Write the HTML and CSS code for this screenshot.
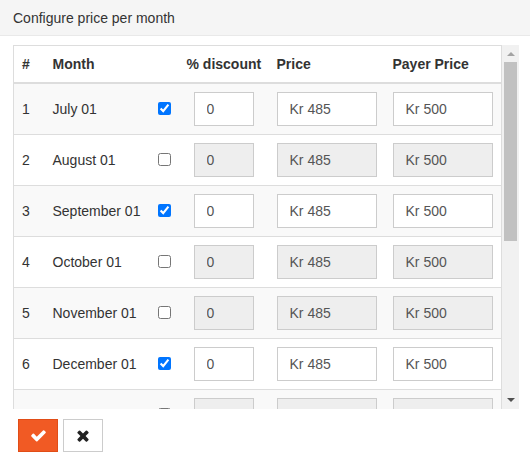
FILE: index.html
```html
<!DOCTYPE html>
<html lang="en">

<head>
    <meta charset="UTF-8">
    <meta name="viewport" content="width=device-width, initial-scale=1.0">
    <title>Configure price per month</title>
    <link rel="stylesheet" href="styles.css">
</head>

<body>
    <div class="modal">
        <div class="modal-header">Configure price per month</div>

        <div class="modal-body">
            <div class="table-frame">
                <div class="table-scroll">
                    <table class="price-table">
                        <colgroup>
                            <col class="col-num">
                            <col class="col-month">
                            <col class="col-check">
                            <col class="col-discount">
                            <col class="col-price">
                            <col>
                        </colgroup>
                        <thead>
                            <tr>
                                <th>#</th>
                                <th>Month</th>
                                <th></th>
                                <th>% discount</th>
                                <th>Price</th>
                                <th>Payer Price</th>
                            </tr>
                        </thead>
                        <tbody>
                            <tr>
                                <td>1</td>
                                <td>July 01</td>
                                <td><input type="checkbox" checked></td>
                                <td class="discount-cell"><input class="form-control small" value="0"></td>
                                <td><input class="form-control" value="Kr 485"></td>
                                <td><input class="form-control" value="Kr 500"></td>
                            </tr>
                            <tr>
                                <td>2</td>
                                <td>August 01</td>
                                <td><input type="checkbox"></td>
                                <td class="discount-cell"><input class="form-control small" value="0" disabled></td>
                                <td><input class="form-control" value="Kr 485" disabled></td>
                                <td><input class="form-control" value="Kr 500" disabled></td>
                            </tr>
                            <tr>
                                <td>3</td>
                                <td>September 01</td>
                                <td><input type="checkbox" checked></td>
                                <td class="discount-cell"><input class="form-control small" value="0"></td>
                                <td><input class="form-control" value="Kr 485"></td>
                                <td><input class="form-control" value="Kr 500"></td>
                            </tr>
                            <tr>
                                <td>4</td>
                                <td>October 01</td>
                                <td><input type="checkbox"></td>
                                <td class="discount-cell"><input class="form-control small" value="0" disabled></td>
                                <td><input class="form-control" value="Kr 485" disabled></td>
                                <td><input class="form-control" value="Kr 500" disabled></td>
                            </tr>
                            <tr>
                                <td>5</td>
                                <td>November 01</td>
                                <td><input type="checkbox"></td>
                                <td class="discount-cell"><input class="form-control small" value="0" disabled></td>
                                <td><input class="form-control" value="Kr 485" disabled></td>
                                <td><input class="form-control" value="Kr 500" disabled></td>
                            </tr>
                            <tr>
                                <td>6</td>
                                <td>December 01</td>
                                <td><input type="checkbox" checked></td>
                                <td class="discount-cell"><input class="form-control small" value="0"></td>
                                <td><input class="form-control" value="Kr 485"></td>
                                <td><input class="form-control" value="Kr 500"></td>
                            </tr>
                            <tr>
                                <td>7</td>
                                <td>January 01</td>
                                <td><input type="checkbox"></td>
                                <td class="discount-cell"><input class="form-control small" value="0" disabled></td>
                                <td><input class="form-control" value="Kr 485" disabled></td>
                                <td><input class="form-control" value="Kr 500" disabled></td>
                            </tr>
                            <tr>
                                <td>8</td>
                                <td>February 01</td>
                                <td><input type="checkbox"></td>
                                <td class="discount-cell"><input class="form-control small" value="0" disabled></td>
                                <td><input class="form-control" value="Kr 485" disabled></td>
                                <td><input class="form-control" value="Kr 500" disabled></td>
                            </tr>
                            <tr>
                                <td>9</td>
                                <td>March 01</td>
                                <td><input type="checkbox"></td>
                                <td class="discount-cell"><input class="form-control small" value="0" disabled></td>
                                <td><input class="form-control" value="Kr 485" disabled></td>
                                <td><input class="form-control" value="Kr 500" disabled></td>
                            </tr>
                            <tr>
                                <td>10</td>
                                <td>April 01</td>
                                <td><input type="checkbox"></td>
                                <td class="discount-cell"><input class="form-control small" value="0" disabled></td>
                                <td><input class="form-control" value="Kr 485" disabled></td>
                                <td><input class="form-control" value="Kr 500" disabled></td>
                            </tr>
                            <tr>
                                <td>11</td>
                                <td>May 01</td>
                                <td><input type="checkbox"></td>
                                <td class="discount-cell"><input class="form-control small" value="0" disabled></td>
                                <td><input class="form-control" value="Kr 485" disabled></td>
                                <td><input class="form-control" value="Kr 500" disabled></td>
                            </tr>
                            <tr>
                                <td>12</td>
                                <td>June 01</td>
                                <td><input type="checkbox"></td>
                                <td class="discount-cell"><input class="form-control small" value="0" disabled></td>
                                <td><input class="form-control" value="Kr 485" disabled></td>
                                <td><input class="form-control" value="Kr 500" disabled></td>
                            </tr>
                        </tbody>
                    </table>
                </div>
                <div class="scrollbar">
                    <div class="scroll-btn"><span class="arrow-up"></span></div>
                    <div class="scroll-track">
                        <div class="scroll-thumb"></div>
                    </div>
                    <div class="scroll-btn"><span class="arrow-down"></span></div>
                </div>
            </div>
        </div>

        <div class="modal-footer">
            <button class="btn btn-save" title="Save">
                <svg width="17" height="17" viewBox="0 0 1792 1792" fill="currentColor">
                    <path d="M1671 566q0 40-28 68l-724 724-136 136q-28 28-68 28t-68-28l-136-136-362-362q-28-28-28-68t28-68l136-136q28-28 68-28t68 28l294 295 656-657q28-28 68-28t68 28l136 136q28 28 28 68z" />
                </svg>
            </button>
            <button class="btn btn-cancel" title="Cancel">
                <svg width="14" height="17" viewBox="0 0 1408 1792" fill="currentColor">
                    <path d="M1298 1322q0 40-28 68l-136 136q-28 28-68 28t-68-28l-294-294-294 294q-28 28-68 28t-68-28l-136-136q-28-28-28-68t28-68l294-294-294-294q-28-28-28-68t28-68l136-136q28-28 68-28t68 28l294 294 294-294q28-28 68-28t68 28l136 136q28 28 28 68t-28 68l-294 294 294 294q28 28 28 68z" />
                </svg>
            </button>
        </div>
    </div>
</body>

</html>
```

FILE: styles.css
```css
body {
    margin: 0;
    font-family: "Liberation Sans", Arial, sans-serif;
    font-size: 14px;
    line-height: 20px;
    color: #333;
    background-color: white;
}

.modal-header {
    padding: 8px 13px 7px;
    background-color: #f5f5f5;
    border-bottom: 1px solid #e9e9e9;
}

.modal-body {
    padding: 9px 11px 0 13px;
}

.table-frame {
    display: flex;
    height: 364px;
}

.table-scroll {
    flex: 1;
    overflow: hidden;
}

/* drawn scrollbar, the native one is not painted in screenshots */
.scrollbar {
    width: 17px;
    display: flex;
    flex-direction: column;
    background-color: #f1f1f1;
}

.scroll-btn {
    height: 17px;
    display: flex;
    justify-content: center;
}

.arrow-up {
    width: 0;
    height: 0;
    margin-top: 7px;
    border-left: 4px solid transparent;
    border-right: 4px solid transparent;
    border-bottom: 4px solid #a3a3a3;
}

.arrow-down {
    width: 0;
    height: 0;
    margin-top: 6px;
    border-left: 4px solid transparent;
    border-right: 4px solid transparent;
    border-top: 4px solid #505050;
}

.scroll-track {
    flex: 1;
    padding: 0 2px;
}

.scroll-thumb {
    height: 179px;
    background-color: #c1c1c1;
}

.price-table {
    width: 100%;
    table-layout: fixed;
    border-collapse: collapse;
    border: 1px solid #ddd;
    margin-bottom: 20px;
}

.col-num {
    width: 31px;
}

.col-month {
    width: 101px;
}

.col-check {
    width: 33px;
}

.col-discount {
    width: 90px;
}

.col-price {
    width: 116px;
}

.price-table th {
    padding: 8px;
    text-align: left;
    font-weight: bold;
    vertical-align: bottom;
    border-bottom: 2px solid #ddd;
    white-space: nowrap;
}

.price-table td {
    padding: 8px;
    vertical-align: middle;
    border-top: 1px solid #ddd;
    white-space: nowrap;
}

.price-table tbody tr:nth-child(odd) {
    background-color: #f9f9f9;
}

.price-table td.discount-cell {
    text-align: center;
}

input[type="checkbox"] {
    vertical-align: middle;
    margin: 0 0 3px 4px;
}

.form-control {
    display: block;
    box-sizing: border-box;
    width: 100px;
    height: 34px;
    padding: 6px 12px;
    font-family: inherit;
    font-size: 14px;
    color: #555;
    background-color: white;
    border: 1px solid #ccc;
    border-radius: 0;
}

.form-control.small {
    display: inline-block;
    width: 60px;
    text-align: left;
}

.form-control:disabled {
    background-color: #eee;
}

.modal-footer {
    display: flex;
    gap: 5px;
    padding: 10px 18px;
}

.btn {
    display: flex;
    align-items: center;
    justify-content: center;
    box-sizing: border-box;
    width: 40px;
    height: 33px;
    padding: 0;
    border: 1px solid #ccc;
    cursor: pointer;
}

.btn-save {
    background-color: #f15a24;
    border-color: #e14d17;
    color: white;
}

.btn-cancel {
    background-color: white;
    color: #222;
}
```
